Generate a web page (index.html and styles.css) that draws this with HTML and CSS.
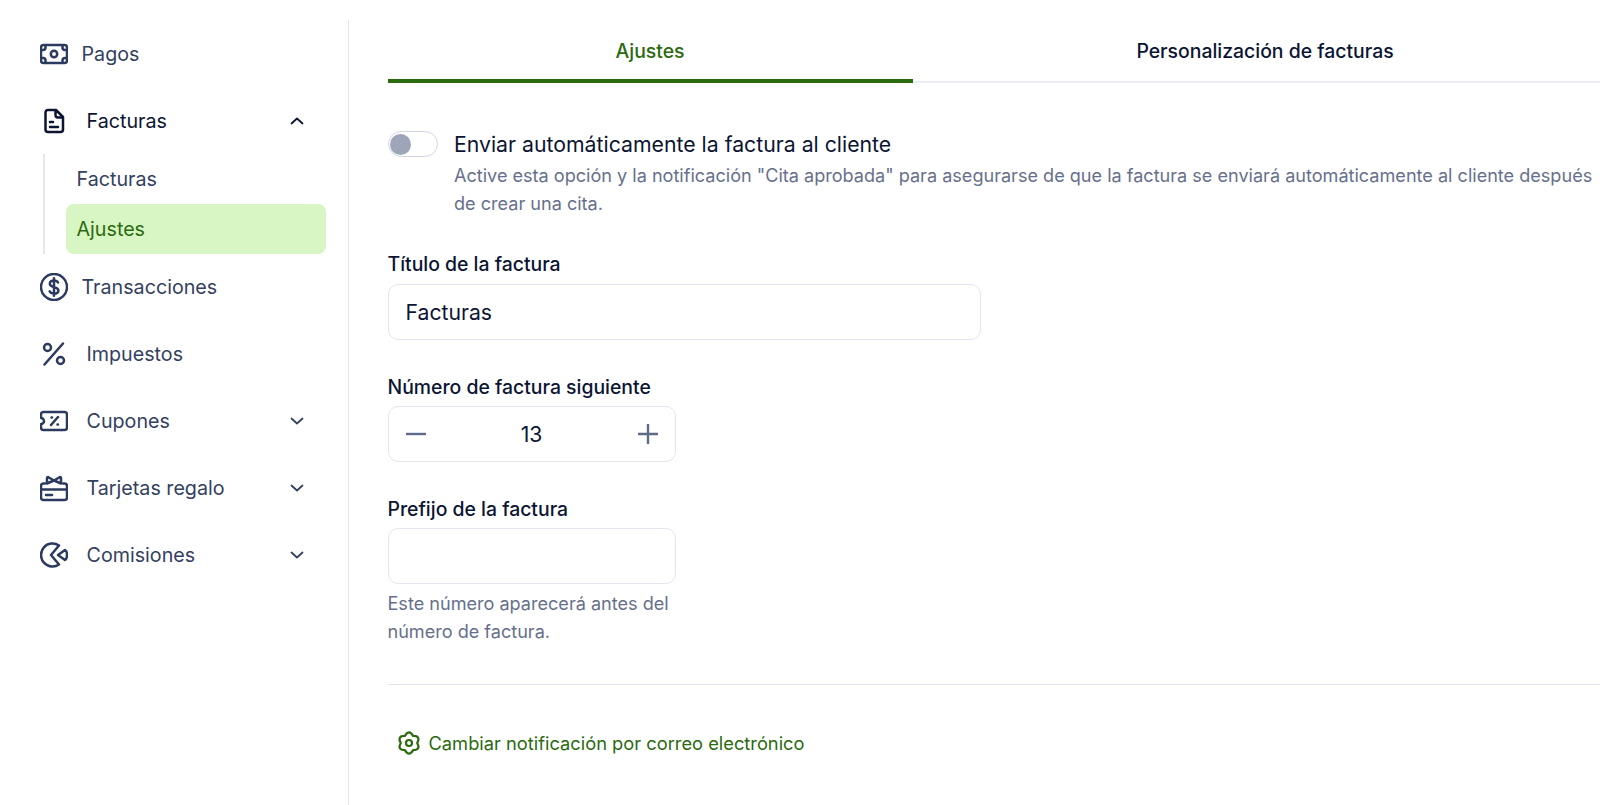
FILE: index.html
```html
<!DOCTYPE html>
<html lang="es">
<head>
  <meta charset="UTF-8" />
  <meta name="viewport" content="width=device-width, initial-scale=1.0" />
  <title>Ajustes de facturas</title>
  <link rel="stylesheet" href="styles.css">
</head>
<body>
  <aside class="sidebar">
    <a class="nav-link">
      <svg class="nav-icon" viewBox="0 0 28 20"><rect x="1" y="1" width="26" height="18" rx="2.500"/><circle cx="14" cy="10" r="3.200"/><path d="M1.500 6H3a2.500 2.500 0 0 0 2.500-2.500v-2M26.500 6H25a2.500 2.500 0 0 1-2.500-2.500v-2M1.500 14H3a2.500 2.500 0 0 1 2.500 2.500v2M26.500 14H25a2.500 2.500 0 0 0-2.500 2.500v2"/></svg>
      <span>Pagos</span>
    </a>

    <a class="nav-link nav-link-wide nav-link-open">
      <svg class="nav-icon" viewBox="0 0 28 24"><path d="M5.500 3.500A2.500 2.500 0 0 1 8 1h8l7 7v12.500a2.500 2.500 0 0 1-2.500 2.500H8a2.500 2.500 0 0 1-2.500-2.500zM15.500 1.500V6a2.500 2.500 0 0 0 2.500 2.500h4.500M10 13h3M10 18h8"/></svg>
      <span>Facturas</span>
      <svg class="chevron" viewBox="0 0 14 8"><path d="M1.500 6.500 7 1.500l5.500 5"/></svg>
    </a>
    <div class="subnav">
      <a class="subnav-link">Facturas</a>
      <a class="subnav-link subnav-link-active">Ajustes</a>
    </div>

    <a class="nav-link">
      <svg class="nav-icon" viewBox="0 0 28 28"><circle cx="14" cy="14" r="13"/><path d="M18 9.500c-.6-1.300-2-2-4-2-2.500 0-4.200 1.200-4.200 3.200 0 4.500 8.600 2.300 8.600 6.700 0 2-1.800 3.200-4.400 3.200-2.200 0-3.800-.9-4.400-2.300M14 5.200v17.600"/></svg>
      <span>Transacciones</span>
    </a>
    <a class="nav-link nav-link-wide">
      <svg class="nav-icon" viewBox="0 0 28 24"><path d="M23 1.500 4.500 22.500"/><circle cx="7.500" cy="5.500" r="3.500"/><circle cx="20.500" cy="18.500" r="3.500"/></svg>
      <span>Impuestos</span>
    </a>
    <a class="nav-link nav-link-wide">
      <svg class="nav-icon" viewBox="0 0 28 20"><path d="M3.500 1h21A2.500 2.500 0 0 1 27 3.500v13a2.500 2.500 0 0 1-2.500 2.500h-21A2.500 2.500 0 0 1 1 16.500V13a3 3 0 0 0 0-6V3.500A2.500 2.500 0 0 1 3.500 1zM11 14l7-8M11.500 6.500h.5M17.500 13.500h.5"/></svg>
      <span>Cupones</span>
      <svg class="chevron" viewBox="0 0 14 8"><path d="M1.500 1.500 7 6.500l5.500-5"/></svg>
    </a>
    <a class="nav-link nav-link-wide">
      <svg class="nav-icon" viewBox="0 0 28 25"><path d="M5 8H3.500A2.500 2.500 0 0 0 1 10.500v11.500a2.500 2.500 0 0 0 2.500 2.500h21A2.500 2.500 0 0 0 27 22V10.500A2.500 2.500 0 0 0 24.500 8H23M1 14h26M6 19.500h6M14 5 8 1.500Q7 1.500 7 3v5l7-3zM14 5l6-3.500q1 0 1 1.500v5l-7-3z"/></svg>
      <span>Tarjetas regalo</span>
      <svg class="chevron" viewBox="0 0 14 8"><path d="M1.500 1.500 7 6.500l5.500-5"/></svg>
    </a>
    <a class="nav-link nav-link-wide">
      <svg class="nav-icon" viewBox="0 0 28 26"><path d="M19 3.500a11.500 11.500 0 1 0 0 19L11 13zM18 13l7-5q2 1 2 5t-2 5z"/></svg>
      <span>Comisiones</span>
      <svg class="chevron" viewBox="0 0 14 8"><path d="M1.500 1.500 7 6.500l5.500-5"/></svg>
    </a>
  </aside>

  <main class="content">
    <div class="tabs">
      <a class="tab tab-active">Ajustes</a>
      <a class="tab tab-second">Personalización de facturas</a>
    </div>

    <div class="toggle-row">
      <span class="toggle"><span class="toggle-thumb"></span></span>
      <div class="toggle-text">
        <div class="toggle-title">Enviar automáticamente la factura al cliente</div>
        <p class="hint">Active esta opción y la notificación "Cita aprobada" para asegurarse de que la factura se enviará automáticamente al cliente después de crear una cita.</p>
      </div>
    </div>

    <div class="field field-title">
      <label class="field-label">Título de la factura</label>
      <div class="input input-wide">Facturas</div>
    </div>

    <div class="field">
      <label class="field-label">Número de factura siguiente</label>
      <div class="input stepper">
        <svg class="stepper-icon" viewBox="0 0 20 20"><path d="M0 10h20"/></svg>
        <span>13</span>
        <svg class="stepper-icon" viewBox="0 0 20 20"><path d="M0 10h20M10 0v20"/></svg>
      </div>
    </div>

    <div class="field">
      <label class="field-label">Prefijo de la factura</label>
      <div class="input"></div>
      <p class="hint hint-narrow">Este número aparecerá antes del número de factura.</p>
    </div>

    <div class="divider"></div>

    <a class="mail-link">
      <svg class="gear" viewBox="0 0 24 24"><path d="M7.900 4.900Q12-2 16.100 4.900 24.100 5 20.200 12 24.100 19 16.100 19.100 12 26 7.900 19.100-.1 19 3.800 12-.1 5 7.900 4.900z"/><circle cx="12" cy="12" r="3"/></svg>
      <span>Cambiar notificación por correo electrónico</span>
    </a>
  </main>
</body>
</html>
```

FILE: styles.css
```css
* {
  box-sizing: border-box;
}

html,
body {
  height: 100%;
}

body {
  margin: 0;
  display: flex;
  overflow: hidden;
  background-color: #fff;
  font-family: 'Inter', sans-serif;
  color: #0b1533;
}

.sidebar {
  width: 349px;
  flex: none;
  margin-top: 20px;
  padding-top: 15px;
  border-right: 1px solid #e3e5ee;
}

.nav-link {
  display: flex;
  align-items: center;
  height: 38px;
  margin-bottom: 29px;
  padding: 0 44px 0 39.500px;
  font-size: 19.700px;
  color: #33415f;
}

.nav-icon {
  width: 28px;
  height: 28px;
  flex: none;
  margin-right: 14px;
  fill: none;
  stroke: currentColor;
  stroke-width: 2.500;
  stroke-linejoin: round;
  stroke-linecap: round;
  color: #2b3a5e;
}

.nav-link-wide .nav-icon {
  margin-right: 19px;
}

.nav-link-open {
  margin-bottom: 14px;
  color: #0b1533;
}

.nav-link-open .nav-icon {
  color: #0b1533;
}

.chevron {
  width: 14px;
  height: 8px;
  margin-left: auto;
  fill: none;
  stroke: currentColor;
  stroke-width: 1.800;
  stroke-linecap: round;
  stroke-linejoin: round;
}

.subnav {
  margin: 0 0 14px 42.500px;
  padding-left: 21.500px;
  width: 283.500px;
  border-left: 2px solid #e6e8ee;
}

.subnav-link {
  display: flex;
  align-items: center;
  height: 50px;
  padding-left: 10.500px;
  border-radius: 8px;
  font-size: 19.700px;
  color: #33415f;
}

.subnav-link-active {
  background-color: #d8f6c4;
  color: #2b6a0e;
}

.content {
  flex: 1;
  min-width: 0;
  padding: 20px 0 0 38.500px;
}

.tabs {
  display: flex;
  height: 63px;
  border-bottom: 2px solid #eceef3;
}

.tab {
  display: flex;
  flex: none;
  align-items: center;
  justify-content: center;
  height: 63px;
  padding-bottom: 1px;
  font-size: 19.400px;
  font-weight: 500;
}

.tab-active {
  width: 525px;
  padding: 3px 0 0;
  border-bottom: 4px solid #2b6a0e;
  color: #2b6a0e;
}

.tab-second {
  width: 705px;
}

.toggle-row {
  display: flex;
  margin-top: 48px;
}

.toggle {
  display: flex;
  align-items: center;
  width: 50.500px;
  height: 26px;
  flex: none;
  margin-right: 16px;
  padding-left: 1px;
  border: 1.500px solid #d3d6e0;
  border-radius: 13px;
}

.toggle-thumb {
  display: block;
  width: 21px;
  height: 21px;
  border-radius: 50%;
  background-color: #9ea5b8;
}

.toggle-text {
  flex: 1;
  min-width: 0;
}

.toggle-title {
  font-size: 21.250px;
  line-height: 26px;
}

.hint {
  margin: 4px 0 0;
  font-size: 18.080px;
  line-height: 28px;
  color: #66708c;
}

.hint-narrow {
  width: 287px;
  margin-top: 5px;
}

.field {
  margin-top: 35px;
}

.field-label {
  display: block;
  margin-bottom: 7px;
  font-size: 19.400px;
  font-weight: 500;
  line-height: 24px;
}

.field-title .field-label {
  margin-bottom: 8px;
}

.input {
  display: flex;
  align-items: center;
  width: 288px;
  height: 56px;
  padding: 0 17px;
  border: 1px solid #e3e5ee;
  border-radius: 10px;
  font-size: 21.200px;
}

.input-wide {
  width: 593px;
}

.stepper {
  justify-content: space-between;
}

.stepper-icon {
  width: 20px;
  height: 20px;
  fill: none;
  stroke: #5f6b88;
  stroke-width: 2.400;
}

.divider {
  height: 1px;
  margin-top: 39px;
  background-color: #e3e5ee;
}

.mail-link {
  display: flex;
  align-items: center;
  margin-top: 46px;
  padding-left: 9px;
  font-size: 18.300px;
  color: #2b6a0e;
}

.gear {
  width: 24px;
  height: 24px;
  margin-right: 8px;
  fill: none;
  stroke: currentColor;
  stroke-width: 2.200;
  stroke-linejoin: round;
}
```
